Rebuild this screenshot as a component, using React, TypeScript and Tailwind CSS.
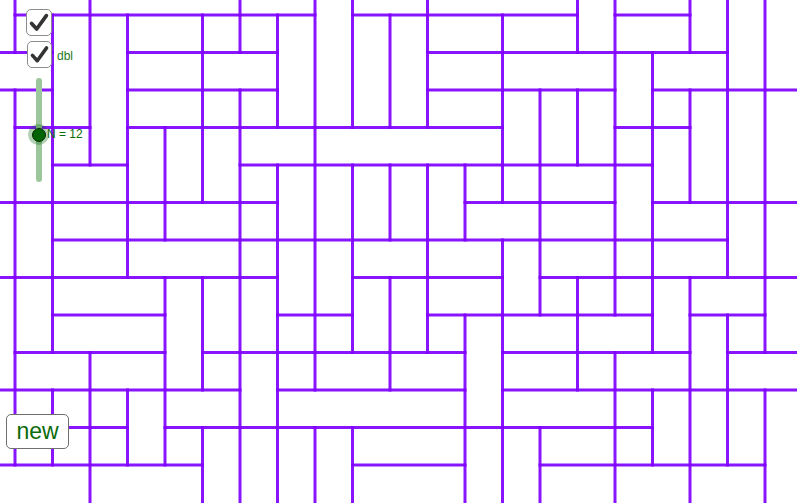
const H: Record<number, number[]> = {
  0: [0, 1, 2, 3, 4, 5, 6, 7, 9, 10, 11, 12, 13, 14, 16, 17],
  1: [-1, 0, 3, 4, 5, 6, 11, 12, 13, 14, 15, 16, 17, 18],
  2: [-1, 0, 3, 4, 5, 6, 11, 12, 13, 14, 15, 17, 18, 19, 20],
  3: [0, 1, 3, 4, 5, 6, 7, 8, 9, 10, 11, 12, 16, 17],
  4: [1, 2, 6, 7, 8, 9, 10, 11, 12, 13, 14, 15, 16],
  5: [-1, 0, 1, 2, 3, 4, 5, 6, 12, 13, 14, 15, 17, 18, 19, 20],
  6: [1, 2, 3, 4, 5, 6, 7, 8, 9, 10, 11, 12, 13, 14, 15, 16, 17, 18],
  7: [-1, 0, 1, 2, 3, 4, 5, 6, 9, 10, 11, 12, 14, 15, 16, 17, 18, 19, 20],
  8: [1, 2, 3, 7, 8, 11, 12, 13, 14, 15, 16, 18, 19],
  9: [0, 1, 2, 3, 5, 6, 7, 8, 9, 10, 11, 13, 14, 15, 16, 17, 19, 20],
  10: [-1, 0, 1, 2, 3, 4, 5, 7, 8, 9, 10, 11, 13, 14, 15, 16, 17, 18, 19, 20],
  11: [1, 2, 4, 5, 6, 7, 8, 9, 10, 11, 12, 13, 14, 15, 16],
  12: [-1, 0, 1, 2, 3, 4, 9, 10, 11, 14, 15, 16, 17, 18, 19],
};

const V: Record<number, number[]> = {
  0: [-1, 0, 2, 3, 4, 5, 6, 7, 8, 9, 10, 11],
  1: [0, 1, 2, 3, 4, 5, 6, 7, 8, 10, 11],
  2: [-1, 0, 1, 2, 3, 9, 10, 11, 12],
  3: [0, 1, 2, 3, 4, 5, 6, 10, 11],
  4: [3, 4, 5, 7, 8, 9, 10, 11],
  5: [0, 1, 2, 3, 4, 7, 8, 9, 11, 12],
  6: [-1, 0, 2, 3, 4, 5, 6, 7, 8, 9, 10, 11, 12],
  7: [0, 1, 2, 4, 5, 6, 7, 8, 9, 10, 11, 12],
  8: [-1, 0, 1, 2, 3, 4, 5, 6, 7, 8, 9, 11, 12],
  9: [-1, 0, 1, 2, 4, 5, 6, 7, 8, 11, 12],
  10: [0, 1, 2, 4, 5, 7, 8, 9],
  11: [-1, 0, 1, 2, 4, 5, 6, 7, 8],
  12: [4, 5, 8, 9, 10, 11, 12],
  13: [0, 1, 2, 3, 4, 6, 7, 8, 9, 10, 11, 12],
  14: [2, 3, 4, 5, 6, 7, 11, 12],
  15: [-1, 0, 2, 3, 7, 8, 9],
  16: [-1, 0, 1, 2, 3, 4, 5, 6, 7, 9, 10, 11, 12],
  17: [1, 2, 3, 4, 5, 6, 7, 8, 10, 11],
  18: [-1, 0, 2, 3, 4, 7, 8, 9, 10, 11, 12],
  19: [-1, 0, 1, 2, 3, 4, 5, 6, 8, 9, 10, 11],
  20: [-1, 0, 1, 2, 3, 4, 5, 6, 7, 8, 10, 11, 12],
};

const at = (i: number) => 15 + 37.5 * i;

// merge consecutive unit edges into runs
function runs(list: number[]) {
  const out: [number, number][] = [];
  for (const i of list) {
    const last = out[out.length - 1];
    if (last && last[1] === i) last[1] = i + 1;
    else out.push([i, i + 1]);
  }
  return out;
}

function Tiling() {
  const lines: { x1: number; y1: number; x2: number; y2: number }[] = [];
  for (const [k, cols] of Object.entries(H)) {
    for (const [a, b] of runs(cols)) lines.push({ x1: at(a), y1: at(+k), x2: at(b), y2: at(+k) });
  }
  for (const [k, rows] of Object.entries(V)) {
    for (const [a, b] of runs(rows)) lines.push({ x1: at(+k), y1: at(a), x2: at(+k), y2: at(b) });
  }
  return (
    <svg className="absolute inset-0" width={797} height={503}>
      {lines.map((l, i) => (
        <line key={i} {...l} stroke="#7f00ff" strokeOpacity={0.92} strokeWidth={3} strokeLinecap="square" />
      ))}
    </svg>
  );
}

function Check({ className = "" }: { className?: string }) {
  return (
    <div className={`h-[27px] rounded-[5px] border-[1.5px] border-[#8c8c8c] bg-white ${className}`}>
      <svg viewBox="0 0 26 27" className="h-full w-full">
        <path d="M5 14.5 L10.5 20.5 L21 6" fill="none" stroke="#333" strokeWidth={4} strokeLinecap="round" strokeLinejoin="round" />
      </svg>
    </div>
  );
}

export default function App() {
  return (
    <div className="relative h-[503px] w-[797px] overflow-hidden bg-white font-['Liberation_Sans',Arial,sans-serif]">
      <Tiling />

      <div className="absolute left-[26px] top-[9px] flex flex-col items-start gap-[5px]">
        <Check className="w-[26px]" />
        <div className="flex items-center gap-[5px] pl-[1px]">
          <Check className="w-[25px]" />
          <span className="pt-[2px] text-[12px] leading-none text-[#1e7a1e]">dbl</span>
        </div>
        <div className="relative ml-[9.5px] mt-[5px] h-[104px] w-[6px] rounded-full bg-[#9cc79c]">
          <div className="absolute left-[-7.5px] top-[46px] flex h-[21px] w-[21px] items-center justify-center rounded-full bg-[#006400]/30">
            <div className="h-[14px] w-[14px] rounded-full border border-[#0a2a0a] bg-[#006400]" />
          </div>
          <span className="absolute left-[11.5px] top-[50px] whitespace-nowrap text-[12px] leading-none text-[#0b6b0b]">N = 12</span>
        </div>
      </div>

      <button className="absolute left-[6px] top-[414px] flex h-[35px] w-[63px] items-center justify-center rounded-[5px] border-[1.5px] border-[#6f6f6f] bg-white text-[23px] leading-none text-[#0b6b0b]">
        new
      </button>
    </div>
  );
}
